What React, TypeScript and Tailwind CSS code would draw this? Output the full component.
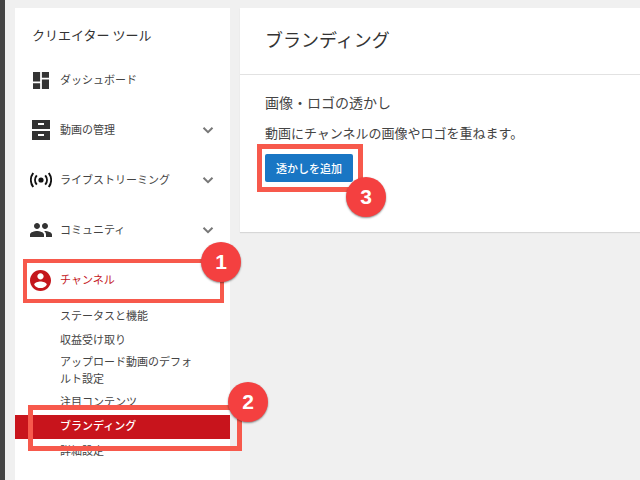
const font = { fontFamily: '"Noto Sans CJK JP", "Liberation Sans", sans-serif' };

function Row({ icon, label, chevron, red }: { icon: React.ReactNode; label: string; chevron?: boolean; red?: boolean }) {
  return (
    <div className="flex items-center h-[50px]">
      <div className="w-[45px] flex justify-center pl-[7px] pr-[1px] shrink-0">{icon}</div>
      <span className={`text-[11px] leading-4 -mt-[3px] ${red ? "text-[#c4161c]" : "text-[#444444]"}`}>{label}</span>
      {chevron && (
        <svg className="ml-auto mr-[15px]" width="14" height="14" viewBox="0 0 14 14" fill="none">
          <path d="M2.5 4.8 7 9.2l4.5-4.4" stroke="#777777" strokeWidth="2" />
        </svg>
      )}
    </div>
  );
}

function Sub({ children, className = "" }: { children: React.ReactNode; className?: string }) {
  return <div className={`pl-[45px] pr-[30px] text-[11px] text-[#444444] ${className}`}>{children}</div>;
}

function Circle({ n, className }: { n: string; className: string }) {
  return (
    <div className={`absolute w-10 h-10 rounded-full bg-[#f44040] text-white flex items-center justify-center text-[21px] font-bold shadow-[0_1px_2px_rgba(0,0,0,0.45)] ${className}`} style={{ fontFamily: '"Liberation Sans", sans-serif' }}>
      {n}
    </div>
  );
}

export default function App() {
  return (
    <div className="relative w-[640px] h-[480px] overflow-hidden bg-[#f0f0f0] flex" style={font}>
      <div className="w-[5px] h-full bg-[#444444] shrink-0" />
      <div className="w-[215px] ml-[10px] mt-2 bg-white shrink-0 h-[472px]">
        <div className="pl-[17px] pt-[17px] h-[47px] text-[13px] leading-5 text-[#333333]">クリエイター ツール</div>
        <Row label="ダッシュボード" icon={
          <svg width="16" height="17" viewBox="3 3 18 18" fill="#333333" preserveAspectRatio="none"><path d="M3 13h8V3H3v10zm0 8h8v-6H3v6zm10 0h8V11h-8v10zm0-18v6h8V3h-8z" /></svg>
        } />
        <Row label="動画の管理" chevron icon={
          <svg width="18" height="20" viewBox="0 0 18 20" fill="#333333"><path fillRule="evenodd" d="M0 0h18v9H0zM6 3v2h6V3zM0 11h18v9H0zM6 14v2h6v-2z" /></svg>
        } />
        <Row label="ライブストリーミング" chevron icon={
          <svg width="22" height="16" viewBox="0 0 22 16" fill="none" stroke="#111111" strokeWidth="2">
            <circle cx="11" cy="8" r="2.6" fill="#111111" stroke="none" />
            <path d="M6.8 3.4a7 7 0 0 0 0 9.2M15.2 3.4a7 7 0 0 1 0 9.2M3.2 1a12 12 0 0 0 0 14M18.8 1a12 12 0 0 1 0 14" />
          </svg>
        } />
        <Row label="コミュニティ" chevron icon={
          <svg width="22" height="22" viewBox="1 1 22 22" fill="#333333"><path d="M16 11c1.66 0 2.99-1.34 2.99-3S17.66 5 16 5c-1.66 0-3 1.34-3 3s1.34 3 3 3zm-8 0c1.66 0 2.99-1.34 2.99-3S9.66 5 8 5C6.34 5 5 6.34 5 8s1.34 3 3 3zm0 2c-2.33 0-7 1.17-7 3.5V19h14v-2.5c0-2.33-4.67-3.5-7-3.5zm8 0c-.29 0-.62.02-.97.05 1.16.84 1.97 1.97 1.97 3.45V19h6v-2.5c0-2.33-4.67-3.5-7-3.5z" /></svg>
        } />
        <Row label="チャンネル" red icon={
          <svg width="21" height="21" viewBox="2 2 20 20" fill="#c4161c"><path d="M12 2C6.48 2 2 6.48 2 12s4.48 10 10 10 10-4.48 10-10S17.52 2 12 2zm0 3c1.66 0 3 1.34 3 3s-1.34 3-3 3-3-1.34-3-3 1.34-3 3-3zm0 14.2c-2.5 0-4.71-1.28-6-3.22.03-1.99 4-3.08 6-3.08 1.99 0 5.97 1.09 6 3.08-1.29 1.94-3.5 3.22-6 3.22z" /></svg>
        } />
        <div className="-mt-[2px]">
          <Sub className="h-6 leading-6">ステータスと機能</Sub>
          <Sub className="h-6 leading-6">収益受け取り</Sub>
          <Sub className="leading-[17px] pt-[2px] h-[38px]">アップロード動画のデフォルト設定</Sub>
          <Sub className="h-6 leading-6">注目コンテンツ</Sub>
          <Sub className="h-6 leading-[21px] mt-[2px] bg-[#c8141c] text-white font-medium">ブランディング</Sub>
          <Sub className="h-6 leading-[22px]">詳細設定</Sub>
        </div>
      </div>
      <div className="w-[400px] ml-[10px] mt-2 bg-white h-[224px] shadow-[0_1px_1px_rgba(0,0,0,0.1)]">
        <div className="h-[67px] border-b border-[#e2e2e2] pl-[25px] pt-[17px] text-[18px] leading-7 text-[#333333]">ブランディング</div>
        <div className="pl-[25px]">
          <div className="mt-[17px] text-[14px] leading-5 text-[#444444]">画像・ロゴの透かし</div>
          <div className="mt-[11px] text-[13px] leading-5 text-[#444444]">動画にチャンネルの画像やロゴを重ねます。</div>
          <button className="mt-[11px] w-[88px] h-[28px] rounded-[2px] bg-[#1976c4] text-white text-[11px] font-medium">透かしを追加</button>
        </div>
      </div>

      <div className="absolute left-[23px] top-[259px] w-[201px] h-[44px] border-[4px] border-[#f7594c]" />
      <div className="absolute left-[28px] top-[405px] w-[214px] h-[46px] border-[5px] border-[#f7594c]" />
      <div className="absolute left-[257px] top-[144px] w-[106px] h-[48px] border-[5px] border-[#f7594c]" />
      <Circle n="1" className="left-[201px] top-[242px]" />
      <Circle n="2" className="left-[228px] top-[382px]" />
      <Circle n="3" className="left-[346px] top-[177px]" />
    </div>
  );
}
